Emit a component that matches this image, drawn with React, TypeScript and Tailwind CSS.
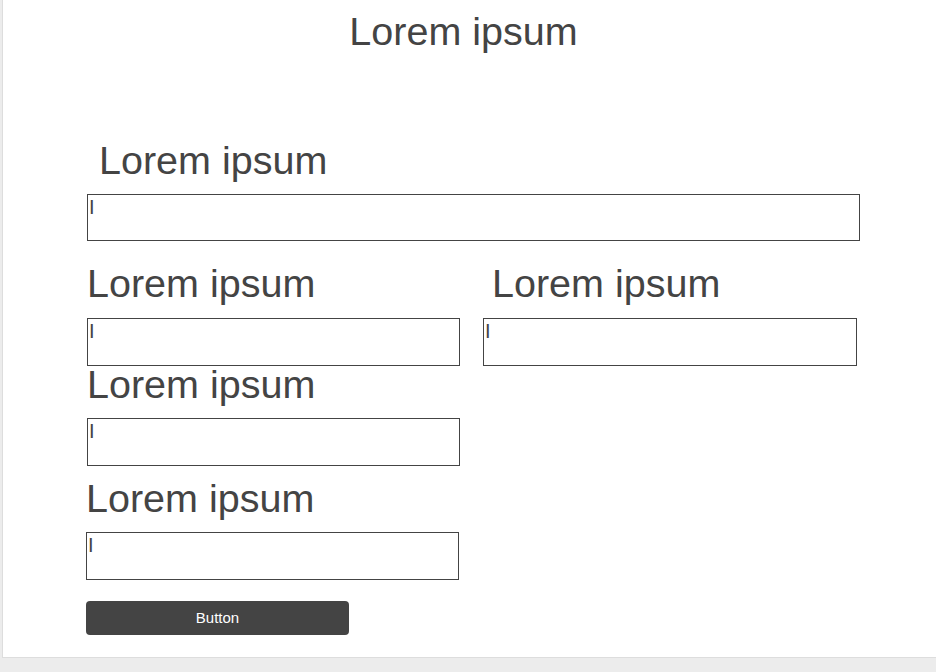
import React, { FC } from "react";

const font = { fontFamily: '"Liberation Sans", Arial, sans-serif' };

interface FieldBoxProps {
  className?: string;
  short?: boolean;
}

// bordered text box with the little caret glyph in the top-left corner
const FieldBox: FC<FieldBoxProps> = ({ className = "", short = false }) => {
  return (
    <div
      className={`${short ? "h-[47px]" : "h-[48px]"} border border-[#444444] bg-white pl-[1px] pt-[2px] ${className}`}
    >
      <span className="block text-[20px] leading-none text-[#444444]">I</span>
    </div>
  );
};

const Label: FC<{ className?: string; children: React.ReactNode }> = ({
  className = "",
  children,
}) => {
  return (
    <div
      className={`text-[39.5px] leading-none whitespace-nowrap text-[#444444] h-[40px] ${className}`}
    >
      {children}
    </div>
  );
};

const App: FC = () => {
  return (
    <div
      className="w-[936px] h-[672px] bg-[#ececec] pl-[2px] overflow-hidden"
      style={font}
    >
      <div className="h-[658px] bg-white border-l border-b border-[#dddddd]">
        {/* HEADING */}
        <div className="pt-[12px] pr-[12px] text-center">
          <Label>Lorem ipsum</Label>
        </div>

        <div className="ml-[84px] w-[773px] mt-[89px]">
          <Label className="pl-[12px]">Lorem ipsum</Label>
          <FieldBox short className="mt-[13px]" />

          <div className="grid grid-cols-[373px_374px] gap-x-[23px] mt-[23px]">
            <Label>Lorem ipsum</Label>
            <Label className="pl-[9px]">Lorem ipsum</Label>
            <FieldBox className="mt-[14px]" />
            <FieldBox className="mt-[14px]" />
          </div>

          <Label className="-mt-[1px]">Lorem ipsum</Label>
          <FieldBox className="mt-[13px] w-[373px]" />

          <Label className="mt-[13px] -ml-[1px]">Lorem ipsum</Label>
          <FieldBox className="mt-[13px] -ml-[1px] w-[373px]" />

          <button className="mt-[21px] -ml-[1px] w-[263px] h-[34px] rounded-[4px] bg-[#444444] text-white text-[15px] flex items-center justify-center">
            Button
          </button>
        </div>
      </div>
    </div>
  );
};

export default App;
